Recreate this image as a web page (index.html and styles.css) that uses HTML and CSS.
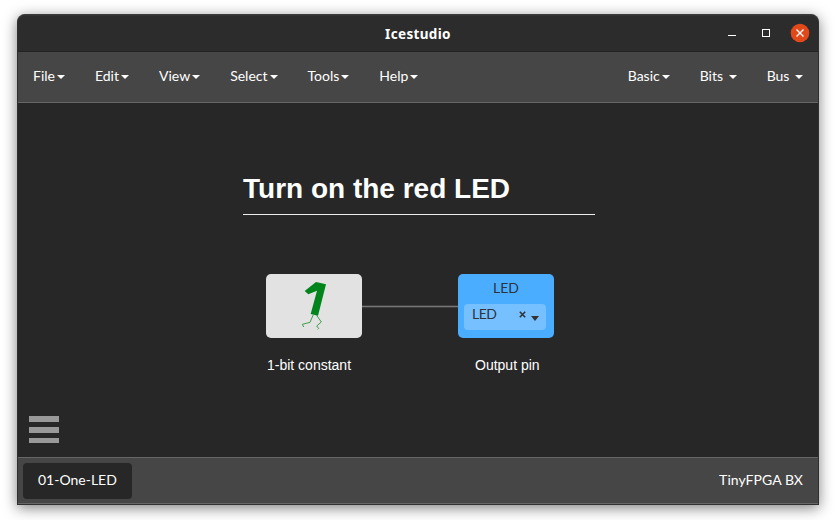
FILE: index.html
```html
<!DOCTYPE html>
<html lang="en">
<head>
<meta charset="utf-8">
<title>Icestudio</title>
<link rel="stylesheet" href="styles.css">
</head>
<body>
<div class="window">
  <header class="titlebar">
    <span class="title">Icestudio</span>
    <svg class="controls" width="86" height="20" viewBox="0 0 86 20">
      <path d="M4 12.5h8" stroke="#fff" fill="none"/>
      <rect x="38.5" y="6.5" width="7" height="7" stroke="#fff" fill="none"/>
      <circle cx="76" cy="10" r="9.3" fill="#e2491a"/>
      <path d="M72.5 6.5l7 7m0-7l-7 7" stroke="#fff" stroke-width="1.4"/>
    </svg>
  </header>
  <nav class="menubar">
    <div class="menu">
      <span class="item">File<i class="caret"></i></span>
      <span class="item">Edit<i class="caret"></i></span>
      <span class="item">View<i class="caret"></i></span>
      <span class="item">Select<i class="caret"></i></span>
      <span class="item">Tools<i class="caret"></i></span>
      <span class="item">Help<i class="caret"></i></span>
    </div>
    <div class="menu">
      <span class="item">Basic<i class="caret"></i></span>
      <span class="item">Bits <i class="caret"></i></span>
      <span class="item">Bus <i class="caret"></i></span>
    </div>
  </nav>
  <main class="canvas">
    <h1 class="heading">Turn on the red LED</h1>
    <div class="wire"></div>
    <div class="block constant">
      <svg class="one" width="40" height="60" viewBox="0 0 120 180">
        <path d="M63 21L93 28L69 122L47 117L66 47L40 58L29 48Z" fill="#00851d"/>
        <path d="M55 119L45 142L22 148L26 156M65 121L79 141L65 153L71 160L68 163" fill="none" stroke="#3c9d4c" stroke-width="3"/>
      </svg>
    </div>
    <div class="block pin">
      <div class="pin-name">LED</div>
      <div class="select">
        <span class="value">LED</span>
        <svg class="clear" width="7" height="7" viewBox="0 0 7 7"><path d="M.8 .8l5.4 5.4m0-5.4l-5.4 5.4" stroke="#333" stroke-width="1.6"/></svg>
        <i class="arrow"></i>
      </div>
    </div>
    <span class="label label-constant">1-bit constant</span>
    <span class="label label-pin">Output pin</span>
    <div class="burger"><i></i><i></i><i></i></div>
  </main>
  <footer class="footer">
    <span class="tab">01-One-LED</span>
    <span class="board">TinyFPGA BX</span>
  </footer>
</div>
</body>
</html>
```

FILE: styles.css
```css
* { box-sizing: border-box; }
body {
  margin: 0;
  height: 520px;
  overflow: hidden;
  padding: 14px 18px 15px 17px;
  background: #fff;
  font: 14px/20px Lato, "Liberation Sans", sans-serif;
  color: #fff;
}
.window {
  height: 491px;
  display: flex;
  flex-direction: column;
  border: 1px solid #303030;
  border-top-color: #3a3a3a;
  border-radius: 8px 8px 0 0;
  background: #272727;
  box-shadow: 0 3px 14px rgba(0, 0, 0, .5);
}
.titlebar {
  height: 37px;
  display: flex;
  align-items: center;
  border-bottom: 1px solid #232323;
  border-radius: 7px 7px 0 0;
  background: #2c2c2c;
  box-shadow: inset 0 1px #343434;
}
.title {
  flex: 1;
  padding: 1px 0 0 94px;
  text-align: center;
  font: bold 13.5px/20px "Noto Sans", sans-serif;
  letter-spacing: .35px;
}
.controls { margin-right: 8px; }
.menubar {
  height: 51px;
  display: flex;
  justify-content: space-between;
  border-bottom: 1px solid #666;
  background: #464646;
}
.menu { display: flex; }
.item {
  padding: 14px 15px 16px;
  white-space: pre;
}
.caret {
  display: inline-block;
  margin-left: 2px;
  vertical-align: middle;
  border: 4px solid transparent;
  border-top-color: #fff;
  border-bottom: 0;
}
.canvas {
  position: relative;
  height: 354px;
  background: #272727;
}
.heading {
  position: absolute;
  left: 225px;
  top: 68px;
  width: 352px;
  height: 44px;
  margin: 0;
  border-bottom: 1px solid #eee;
  font: bold 28px/36px "Liberation Sans", sans-serif;
}
.wire {
  position: absolute;
  left: 344px;
  top: 202px;
  width: 96px;
  height: 3px;
  border: solid #3e3e3e;
  border-width: 1px 0;
  background: #777;
}
.block {
  position: absolute;
  top: 171px;
  width: 96px;
  height: 64px;
  border-radius: 5px;
}
.constant {
  left: 248px;
  padding: 1px 0 0 29px;
  background: #e2e2e2;
}
.one { display: block; }
.pin {
  left: 440px;
  padding: 4px 8px 8px 6px;
  background: #4badff;
  color: #2b333c;
}
.pin-name {
  height: 26px;
  padding-left: 2px;
  text-align: center;
}
.select {
  height: 26px;
  display: flex;
  padding: 0 7px 0 8px;
  border-radius: 4px;
  background: #76c0ff;
}
.value {
  flex: 1;
  letter-spacing: -.5px;
}
.clear {
  margin: 7px 5px 0 0;
}
.arrow {
  width: 8px;
  height: 5px;
  margin-top: 12px;
  background: #333;
  clip-path: polygon(0 0, 100% 0, 50% 100%);
}
.label {
  position: absolute;
  top: 252px;
  font-family: "Liberation Sans", sans-serif;
  white-space: nowrap;
}
.label-constant { left: 249px; }
.label-pin { left: 457px; }
.burger {
  position: absolute;
  left: 11px;
  top: 313px;
  width: 30px;
  height: 27px;
  display: flex;
  flex-direction: column;
  justify-content: space-between;
}
.burger i {
  height: 6px;
  background: #999;
}
.burger i:last-child { height: 5px; }
.footer {
  height: 47px;
  display: flex;
  justify-content: space-between;
  align-items: flex-start;
  padding: 5px 15px 0 5px;
  border-top: 1px solid #666;
  border-bottom: 1px solid #666;
  background: #464646;
}
.tab {
  height: 36px;
  padding: 7px 15px;
  border-radius: 4px;
  background: #272727;
}
.board {
  padding-top: 7px;
  letter-spacing: .05px;
}
```
